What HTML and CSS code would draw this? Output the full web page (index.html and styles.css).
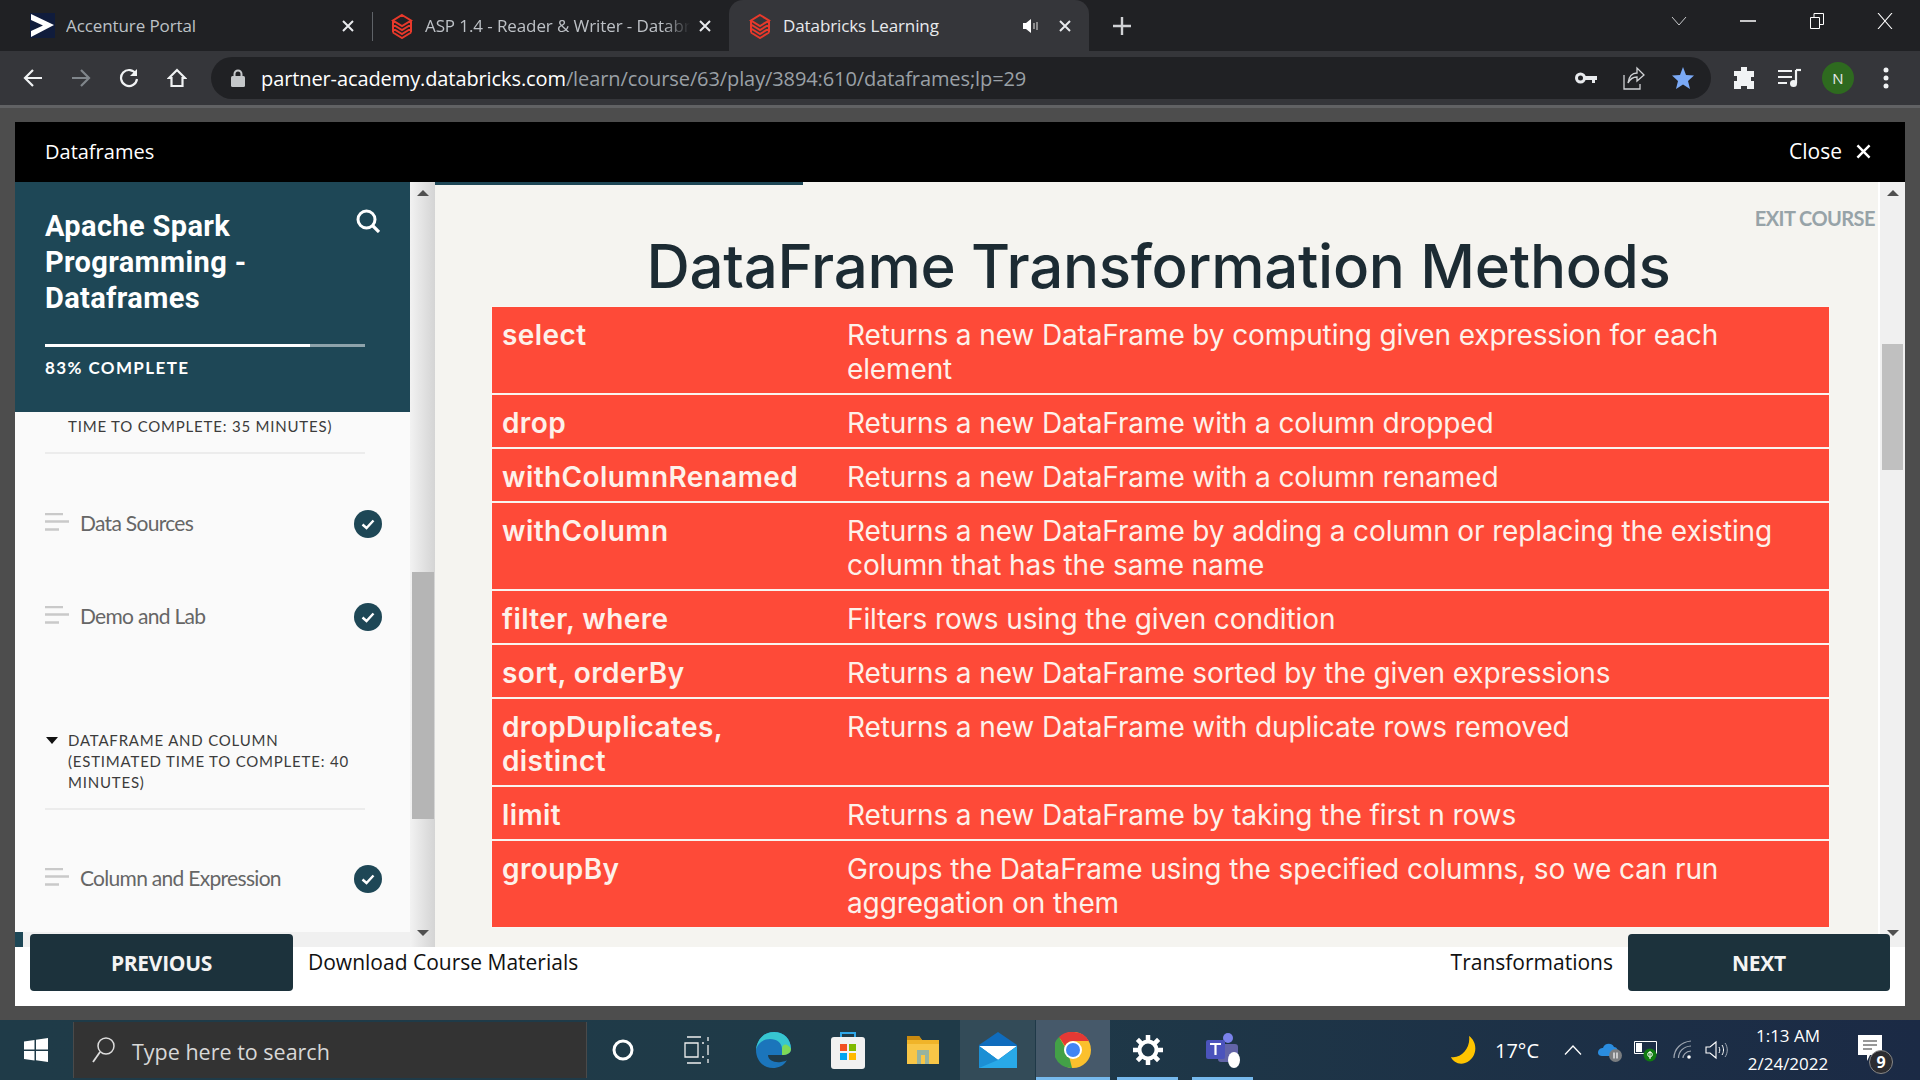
FILE: index.html
```html
<!DOCTYPE html>
<html lang="en">
<head>
    <meta charset="UTF-8">
    <title>Databricks Learning</title>
    <link rel="stylesheet" href="styles.css">
</head>
<body>
    <svg class="sprites" width="0" height="0">
        <symbol id="bricks" viewBox="0 0 24 26">
            <path d="M12 2 21 7.5 12 13 3 7.5ZM3 11.5 12 17 21 11.5M3 15.5 12 21 21 15.5M3 19.5 12 25 21 19.5M3 7.5V19.5M21 7.5V19.5" fill="none" stroke="#e8392b" stroke-width="2"/>
        </symbol>
        <symbol id="done" viewBox="0 0 28 28">
            <circle cx="14" cy="14" r="14" fill="#1e4756"/>
            <path d="M8.5 14.5 12.5 18 19.5 10.5" fill="none" stroke="#fff" stroke-width="2.4"/>
        </symbol>
        <symbol id="lines" viewBox="0 0 24 18">
            <path d="M0 1H18M0 8.500H24M0 16.500H14" stroke="#c9c9c9" stroke-width="2.600"/>
        </symbol>
        <symbol id="cross" viewBox="0 0 14 14">
            <path d="M2 2 12 12M12 2 2 12" fill="none" stroke="currentColor" stroke-width="2"/>
        </symbol>
    </svg>

    <header class="tabstrip">
        <div class="tab tab-first">
            <svg class="favicon" width="25" height="25" viewBox="0 0 25 25">
                <rect width="25" height="25" fill="#101c3c"/>
                <path d="M1 1 24 12 1 24V18L13 12.500 1 7Z" fill="#fff"/>
            </svg>
            <span class="tab-title">Accenture Portal</span>
            <svg class="tab-close" width="14" height="14"><use href="#cross"/></svg>
        </div>
        <div class="tab tab-second">
            <svg class="favicon" width="24" height="26"><use href="#bricks"/></svg>
            <span class="tab-title tab-fade">ASP 1.4 - Reader &amp; Writer - Databricks Academy</span>
            <svg class="tab-close" width="14" height="14"><use href="#cross"/></svg>
        </div>
        <div class="tab tab-active">
            <svg class="favicon" width="24" height="26"><use href="#bricks"/></svg>
            <span class="tab-title">Databricks Learning</span>
            <svg class="tab-sound" width="16" height="14" viewBox="0 0 16 14"><path d="M0 4H3L8 0V14L3 10H0Z" fill="#fff"/><path d="M11 4V10M14 3V11" stroke="#aaa" stroke-width="1.500"/></svg>
            <svg class="tab-close" width="14" height="14"><use href="#cross"/></svg>
        </div>
        <svg class="tab-new" width="18" height="18" viewBox="0 0 18 18"><path d="M9 0V18M0 9H18" stroke="#d0d2d5" stroke-width="2.400"/></svg>
        <div class="window-btns">
            <svg width="16" height="10" viewBox="0 0 16 10"><path d="M1 1 8 9 15 1" fill="none" stroke="#c8cacc"/></svg>
            <svg width="16" height="2" viewBox="0 0 16 2"><path d="M0 1H16" stroke="#fff" stroke-width="1.500"/></svg>
            <svg width="14" height="16" viewBox="0 0 14 16"><path d="M.5 4.500H9.500V15.500H.5ZM4 4.500V.5H13.500V11.500H9.500" fill="none" stroke="#fff"/></svg>
            <svg width="16" height="16" viewBox="0 0 16 16"><path d="M1 0 15 16M15 0 1 16" stroke="#fff" stroke-width="1.100"/></svg>
        </div>
    </header>

    <nav class="toolbar">
        <svg class="nav-btn" width="20" height="20" viewBox="0 0 20 20"><path d="M19 10H3M10 2 2 10 10 18" fill="none" stroke="#f1f3f4" stroke-width="2.200"/></svg>
        <svg class="nav-btn" width="20" height="20" viewBox="0 0 20 20"><path d="M1 10H17M10 2 18 10 10 18" fill="none" stroke="#80868b" stroke-width="2.200"/></svg>
        <svg class="nav-btn" width="20" height="20" viewBox="0 0 20 20"><path d="M17 6A8 8 0 1 0 18 11" fill="none" stroke="#f1f3f4" stroke-width="2.200"/><path d="M18 1V8H11Z" fill="#f1f3f4"/></svg>
        <svg class="nav-btn" width="20" height="20" viewBox="0 0 20 20"><path d="M10 2 2 10H4.500V18H15.500V10H18Z" fill="none" stroke="#f1f3f4" stroke-width="2.200"/></svg>
        <div class="omnibox">
            <svg class="lock" width="14" height="18" viewBox="0 0 14 18"><path d="M3.500 8V5A3.500 3.500 0 0 1 10.500 5V8" fill="none" stroke="#c4c7c9" stroke-width="2"/><rect y="7" width="14" height="11" rx="1.500" fill="#c4c7c9"/></svg>
            <span class="url"><b>partner-academy.databricks.com</b>/learn/course/63/play/3894:610/dataframes;lp=29</span>
            <svg class="omni-icon" width="22" height="12" viewBox="0 0 22 12"><circle cx="5.500" cy="6" r="4" fill="none" stroke="#e8eaed" stroke-width="3"/><path d="M9 4H22V8H20V11H17V8H9Z" fill="#e8eaed"/></svg>
            <svg class="omni-icon" width="22" height="24" viewBox="0 0 22 24"><path d="M1 9V23H17V18M5 17C6 10 10 7 14 7V2L21 9 14 15V11C10 11 7 13 5 17Z" fill="none" stroke="#d0d2d5" stroke-width="1.300"/></svg>
            <svg class="omni-icon" width="24" height="24" viewBox="0 0 24 24"><path d="M12 1 15 9 23 9.500 17 15 19 23 12 18.500 5 23 7 15 1 9.500 9 9Z" fill="#7baaf7"/></svg>
        </div>
        <svg class="ext-btn" width="22" height="24" viewBox="0 0 22 24"><path d="M8 1H14V5H21V11H18V15H21V23H14V20H8V23H1V15H4V10H1V5H8Z" fill="#f1f3f4"/></svg>
        <svg class="ext-btn" width="24" height="20" viewBox="0 0 24 20"><path d="M1 3H15M1 9H15M1 15H10" stroke="#f1f3f4" stroke-width="2"/><path d="M19 2V15" stroke="#f1f3f4" stroke-width="2.200"/><path d="M19 2H24" stroke="#f1f3f4" stroke-width="2.200"/><circle cx="16.500" cy="15.500" r="3.500" fill="#f1f3f4"/></svg>
        <span class="avatar">N</span>
        <svg class="ext-btn" width="6" height="22" viewBox="0 0 6 22"><circle cx="3" cy="3" r="2.500" fill="#f1f3f4"/><circle cx="3" cy="11" r="2.500" fill="#f1f3f4"/><circle cx="3" cy="19" r="2.500" fill="#f1f3f4"/></svg>
    </nav>

    <main class="stage">
        <section class="player">
            <div class="player-head">
                <span class="player-name">Dataframes</span>
                <span class="player-close">Close <svg width="17" height="17"><use href="#cross"/></svg></span>
            </div>

            <div class="player-body">
                <aside class="sidebar">
                    <div class="course-head">
                        <div class="course-top">
                            <h2>Apache Spark Programming - Dataframes</h2>
                            <svg width="24" height="24" viewBox="0 0 24 24"><circle cx="10.500" cy="10.500" r="8.500" fill="none" stroke="#fff" stroke-width="3"/><path d="M16.500 16.500 23 23" stroke="#fff" stroke-width="3.200"/></svg>
                        </div>
                        <div class="progress"><div class="progress-fill"></div></div>
                        <div class="progress-label">83% COMPLETE</div>
                    </div>
                    <div class="lessons">
                        <div class="section-label section-cut">TIME TO COMPLETE: 35 MINUTES)</div>
                        <div class="lesson lesson-first">
                            <svg width="24" height="18"><use href="#lines"/></svg>
                            <span>Data Sources</span>
                            <svg class="lesson-done" width="28" height="28"><use href="#done"/></svg>
                        </div>
                        <div class="lesson lesson-second">
                            <svg width="24" height="18"><use href="#lines"/></svg>
                            <span>Demo and Lab</span>
                            <svg class="lesson-done" width="28" height="28"><use href="#done"/></svg>
                        </div>
                        <div class="section-label section-open">DATAFRAME AND COLUMN (ESTIMATED TIME TO COMPLETE: 40 MINUTES)</div>
                        <div class="lesson lesson-third">
                            <svg width="24" height="18"><use href="#lines"/></svg>
                            <span>Column and Expression</span>
                            <svg class="lesson-done" width="28" height="28"><use href="#done"/></svg>
                        </div>
                    </div>
                    <div class="sidebar-foot"></div>
                </aside>

                <div class="scrollbar scrollbar-side">
                    <i class="arrow-up"></i>
                    <div class="thumb thumb-side"></div>
                    <i class="arrow-down"></i>
                </div>

                <div class="slide">
                    <div class="slide-progress"></div>
                    <div class="exit-course">EXIT COURSE</div>
                    <h1>DataFrame Transformation Methods</h1>
                    <table class="methods">
                        <tr><th>select</th><td>Returns a new DataFrame by computing given expression for each element</td></tr>
                        <tr><th>drop</th><td>Returns a new DataFrame with a column dropped</td></tr>
                        <tr><th>withColumnRenamed</th><td>Returns a new DataFrame with a column renamed</td></tr>
                        <tr><th>withColumn</th><td>Returns a new DataFrame by adding a column or replacing the existing column that has the same name</td></tr>
                        <tr><th>filter, where</th><td>Filters rows using the given condition</td></tr>
                        <tr><th>sort, orderBy</th><td>Returns a new DataFrame sorted by the given expressions</td></tr>
                        <tr><th>dropDuplicates, distinct</th><td>Returns a new DataFrame with duplicate rows removed</td></tr>
                        <tr><th>limit</th><td>Returns a new DataFrame by taking the first n rows</td></tr>
                        <tr><th>groupBy</th><td>Groups the DataFrame using the specified columns, so we can run aggregation on them</td></tr>
                    </table>
                </div>

                <div class="scrollbar scrollbar-main">
                    <i class="arrow-up"></i>
                    <div class="thumb thumb-main"></div>
                    <i class="arrow-down"></i>
                </div>
            </div>

            <div class="player-foot">
                <button class="foot-btn">PREVIOUS</button>
                <span class="foot-link">Download Course Materials</span>
                <span class="foot-next">Transformations</span>
                <button class="foot-btn foot-btn-next">NEXT</button>
            </div>
        </section>
    </main>

    <footer class="taskbar">
        <div class="start">
            <svg width="24" height="24" viewBox="0 0 24 24"><path d="M0 3.500 10.500 2V11.500H0ZM12 1.800 24 0V11.500H12ZM0 13H10.500V22.500L0 21ZM12 13H24V24L12 22.300Z" fill="#fff"/></svg>
        </div>
        <div class="search">
            <svg width="26" height="28" viewBox="0 0 26 28"><circle cx="15" cy="10" r="8" fill="none" stroke="#ddd" stroke-width="1.500"/><path d="M9 16 2 26" stroke="#ddd" stroke-width="1.800"/></svg>
            <span>Type here to search</span>
        </div>
        <div class="task-slot slot-cortana"><svg width="24" height="24" viewBox="0 0 24 24"><circle cx="12" cy="12" r="9" fill="none" stroke="#fff" stroke-width="3"/></svg></div>
        <div class="task-slot slot-view"><svg width="26" height="28" viewBox="0 0 26 28"><path d="M3 1H17M3 27H17M1 7H14V21H1ZM18 7H20M18 21H20M24 1V5M24 9V19M24 23V27" fill="none" stroke="#eee" stroke-width="1.300"/></svg></div>
        <div class="task-slot">
            <svg width="38" height="38" viewBox="0 0 38 38"><path d="M2 19C3 8 10 1 20 1 30 1 37 8 37 18 37 22 33 24 28 24H14C14 29 20 32 27 31 30 30.500 32 30 33 29 30 35 24 37 19 37 9 37 2 29 2 19Z" fill="#1b75bb"/><path d="M2 19C4 11 10 8 16 8 23 8 28 12 28 18H37C37 8 30 1 20 1 10 1 3 8 2 19Z" fill="#37c6d0"/><path d="M28 18C28 12 34 12 37 18 37 22 33 24 28 24Z" fill="#7dd957"/></svg>
        </div>
        <div class="task-slot">
            <svg width="34" height="38" viewBox="0 0 34 38"><path d="M10 8V2H24V8" fill="none" stroke="#30a7e8" stroke-width="2"/><rect y="6" width="34" height="32" rx="3" fill="#f1f1f1"/><rect x="9" y="13" width="7" height="7" fill="#f25022"/><rect x="18" y="13" width="7" height="7" fill="#7fba00"/><rect x="9" y="22" width="7" height="7" fill="#00a4ef"/><rect x="18" y="22" width="7" height="7" fill="#ffb900"/></svg>
        </div>
        <div class="task-slot">
            <svg width="32" height="32" viewBox="0 0 32 32"><path d="M0 2H12L15 6H32V30H0Z" fill="#f0b429"/><path d="M0 2H12L15 6H0Z" fill="#c98a10"/><path d="M10 16H22V30H18V21H14V30H10Z" fill="#2f8fd8"/><path d="M0 10H32V30H0Z" fill="#ffd766" opacity=".5"/></svg>
        </div>
        <div class="task-slot slot-lit">
            <svg width="38" height="36" viewBox="0 0 38 36"><path d="M0 13 19 0 38 13V36H0Z" fill="#0f6cbd"/><path d="M0 14H38L19 28Z" fill="#fff"/><path d="M0 14V36H38V14L19 28Z" fill="#29a9e8"/><path d="M0 14 19 28 0 36Z" fill="#1c8fd4"/></svg>
        </div>
        <div class="task-slot slot-lit slot-chrome slot-open">
            <svg width="36" height="36" viewBox="0 0 36 36"><circle cx="18" cy="18" r="18" fill="#fbc02d"/><path d="M18 0A18 18 0 0 1 34 9H18A9 9 0 0 0 10 14L4 5A18 18 0 0 1 18 0Z" fill="#e53935"/><path d="M4 5 13 20 17 36A18 18 0 0 1 4 5Z" fill="#43a047"/><circle cx="18" cy="18" r="9" fill="#fff"/><circle cx="18" cy="18" r="7" fill="#4285f4"/></svg>
        </div>
        <div class="task-slot slot-open">
            <svg width="30" height="30" viewBox="0 0 30 30"><circle cx="15" cy="15" r="8.500" fill="none" stroke="#fff" stroke-width="4"/><path d="M15 0V6M15 24V30M0 15H6M24 15H30M4.400 4.400 8.600 8.600M21.400 21.400 25.600 25.600M25.600 4.400 21.400 8.600M8.600 21.400 4.400 25.600" stroke="#fff" stroke-width="4.500"/></svg>
        </div>
        <div class="task-slot slot-open">
            <svg width="36" height="36" viewBox="0 0 36 36"><circle cx="23" cy="6" r="5" fill="#7b83eb"/><rect x="13" y="12" width="20" height="18" rx="3" fill="#6264a7"/><rect x="1" y="8" width="19" height="19" rx="2" fill="#4b53bc"/><path d="M5 12H16M10.500 12V23" stroke="#fff" stroke-width="2.200"/><ellipse cx="29" cy="28" rx="6" ry="8" fill="#fff"/></svg>
        </div>

        <div class="tray">
            <div class="tray-slot tray-moon"><svg width="26" height="28" viewBox="0 0 26 28"><path d="M18 0C27 6 27 22 14 27 8 29 2 26 0 21 10 23 20 12 18 0Z" fill="#ffc400"/></svg></div>
            <div class="tray-temp">17°C</div>
            <div class="tray-slot tray-chev"><svg width="18" height="10" viewBox="0 0 18 10"><path d="M1 9.500 9 1 17 9.500" fill="none" stroke="#fff" stroke-width="1.300"/></svg></div>
            <div class="tray-slot tray-cloud"><svg width="24" height="24" viewBox="0 0 24 24"><path d="M0 15C0 11 3 10 5 10 6 5 14 4 16 9 19 9 20 12 20 15 20 17 18 18 16 18H4C2 18 0 17 0 15Z" fill="#2a8de0"/><circle cx="17.500" cy="17.500" r="6.500" fill="#7a7d80"/><path d="M16 14.500V20.500M19 14.500V20.500" stroke="#fff" stroke-width="1.200"/></svg></div>
            <div class="tray-slot tray-batt"><svg width="24" height="24" viewBox="0 0 24 24"><path d="M.5 3.500H22.500V15.500H.5Z" fill="none" stroke="#fff"/><rect x="2" y="5" width="6" height="9" fill="#fff"/><circle cx="16" cy="17" r="6.500" fill="#107c10"/><path d="M16 13V21M14 15C13 18 15 19 16 19 17 19 19 18 18 15 17 14 15 14 14 15Z" fill="none" stroke="#fff"/></svg></div>
            <div class="tray-slot tray-wifi"><svg width="20" height="20" viewBox="0 0 20 20"><path d="M1 18C1 9 8 2 18 1M5.500 18C5.500 12 10 6.500 18 6M10 18C10 15 12.500 11.500 18 11" fill="none" stroke="#9fa7b2" stroke-width="1.200"/><circle cx="16" cy="17" r="1.800" fill="#fff"/></svg></div>
            <div class="tray-slot tray-vol"><svg width="24" height="20" viewBox="0 0 24 20"><path d="M1 7H5L11 2V18L5 13H1Z" fill="none" stroke="#fff" stroke-width="1.100"/><path d="M14 7C15 9 15 11 14 13M17 5C19 8 19 12 17 15" fill="none" stroke="#fff"/><path d="M20 3C23 7 23 13 20 17" fill="none" stroke="#9fa7b2"/></svg></div>
            <div class="clock">
                <span>1:13 AM</span>
                <span>2/24/2022</span>
            </div>
            <div class="notif">
                <svg width="24" height="28" viewBox="0 0 24 28"><path d="M0 0H24V20H12L9 26V20H0Z" fill="#fff"/><path d="M5 6H19M5 10H19M5 14H14" stroke="#333" stroke-width="1.200"/></svg>
                <span class="notif-count">9</span>
            </div>
        </div>
    </footer>
</body>
</html>
```
FILE: styles.css
```css
/* Page */
* {
    box-sizing: border-box;
}

body {
    margin: 0;
    width: 1920px;
    height: 1080px;
    overflow: hidden;
    display: flex;
    flex-direction: column;
    background-color: #4d4d4d;
    font-family: "Open Sans", sans-serif;
}

.sprites {
    position: absolute;
}

/* Tabs */
.tabstrip {
    height: 51px;
    flex-shrink: 0;
    display: flex;
    align-items: stretch;
    background-color: #202124;
    color: #bdc1c6;
    font-size: 17px;
    letter-spacing: -0.1px;
}

.tab {
    width: 357px;
    display: flex;
    align-items: center;
    position: relative;
}

.tab-first {
    margin-left: 15px;
    padding-left: 15px;
}

.tab-second {
    padding-left: 18px;
}

.tab-second::before {
    content: "";
    position: absolute;
    left: 0;
    top: 12px;
    height: 29px;
    border-left: 1px solid #5f6368;
}

.tab-active {
    width: 360px;
    padding-left: 19px;
    background-color: #35363a;
    border-radius: 14px 14px 0 0;
    color: #e8eaed;
}

.favicon {
    flex-shrink: 0;
    margin-right: 11px;
}

.tab-title {
    flex: 1;
    white-space: nowrap;
    overflow: hidden;
}

.tab-fade {
    -webkit-mask-image: linear-gradient(to right, #000 90%, transparent);
    mask-image: linear-gradient(to right, #000 90%, transparent);
}

.tab-close {
    margin: 0 17px 0 8px;
    flex-shrink: 0;
    color: #e8eaed;
}

.tab-sound {
    margin-right: 11px;
}

.tab-new {
    align-self: center;
    margin-left: 24px;
}

.window-btns {
    margin-left: auto;
    display: flex;
    align-items: center;
    height: 42px;
    width: 249px;
    padding: 0 27px 0 0;
    justify-content: space-between;
}

/* Address bar */
.toolbar {
    height: 54px;
    flex-shrink: 0;
    display: flex;
    align-items: center;
    padding-bottom: 0;
    background-color: #35363a;
    border-bottom: 0;
    box-shadow: 0 3px 0 #616264;
    position: relative;
    z-index: 1;
}

.nav-btn {
    margin-left: 23px;
    margin-right: 5px;
}

.omnibox {
    width: 1500px;
    height: 42px;
    margin-left: 19px;
    padding: 0 16px 0 20px;
    display: flex;
    align-items: center;
    border-radius: 21px;
    background-color: #202124;
}

.lock {
    margin-right: 16px;
}

.url {
    flex: 1;
    font-size: 20px;
    letter-spacing: -0.1px;
    color: #9aa0a6;
    white-space: nowrap;
}

.url b {
    font-weight: 400;
    color: #fff;
}

.omni-icon {
    margin-left: 26px;
}

.ext-btn {
    margin-left: 22px;
}

.avatar {
    width: 32px;
    height: 32px;
    margin-left: 21px;
    border-radius: 50%;
    display: flex;
    align-items: center;
    justify-content: center;
    background-color: #2e6a1f;
    color: #e8eaed;
    font-size: 15px;
}

.avatar + .ext-btn {
    margin-left: 29px;
}

/* Player */
.stage {
    flex: 1;
    padding: 17px 15px 14px;
    min-height: 0;
}

.player {
    height: 884px;
    display: flex;
    flex-direction: column;
    background-color: #fff;
}

.player-head {
    height: 60px;
    flex-shrink: 0;
    display: flex;
    align-items: center;
    justify-content: space-between;
    padding: 0 33px 2px 30px;
    background-color: #000;
    color: #fff;
    font-size: 20px;
}

.player-close {
    display: flex;
    align-items: center;
    gap: 13px;
    font-size: 21px;
}

.player-body {
    flex: 1;
    display: flex;
    min-height: 0;
}

/* Sidebar */
.sidebar {
    width: 395px;
    display: flex;
    flex-direction: column;
    background-color: #fafafa;
}

.course-head {
    height: 230px;
    flex-shrink: 0;
    padding: 26px 30px 0;
    background-color: #1e4756;
    color: #fff;
}

.course-top {
    display: flex;
    justify-content: space-between;
    align-items: flex-start;
    height: 136px;
}

.course-top h2 {
    margin: 0;
    width: 270px;
    font-family: Roboto, sans-serif;
    font-size: 29px;
    line-height: 36px;
    font-weight: 700;
    letter-spacing: 0.35px;
}

.course-top svg {
    margin: 1px 0 0 0;
}

.progress {
    height: 3px;
    width: 320px;
    background-color: #8ea3ab;
}

.progress-fill {
    width: 265px;
    height: 100%;
    background-color: #fff;
}

.progress-label {
    margin-top: 10px;
    font-family: Lato, sans-serif;
    font-size: 17px;
    font-weight: 700;
    letter-spacing: 1.4px;
}

.lessons {
    flex: 1;
    min-height: 0;
    overflow: hidden;
    padding: 4px 28px 0 30px;
}

.section-label {
    width: 320px;
    padding: 0 0 15px 23px;
    border-bottom: 2px solid #ececec;
    font-family: Lato, sans-serif;
    font-size: 15px;
    line-height: 21px;
    letter-spacing: 0.8px;
    color: #3c3c3c;
}

.section-open {
    position: relative;
    margin-top: 95px;
    padding-right: 15px;
}

.section-open::before {
    content: "";
    position: absolute;
    left: 1px;
    top: 7px;
    border-style: solid;
    border-width: 7px 6px 0;
    border-color: #111 transparent transparent;
}

.lesson {
    height: 40px;
    display: flex;
    align-items: center;
    font-family: Lato, sans-serif;
    font-size: 21px;
    letter-spacing: -0.7px;
    color: #666;
}

.lesson > svg:first-child {
    margin-right: 11px;
    margin-top: -1px;
}

.lesson-first {
    margin-top: 48px;
}

.lesson-second {
    margin-top: 53px;
}

.lesson-third {
    margin-top: 47px;
}

.lesson-done {
    margin-left: auto;
    margin-top: 4px;
}

.sidebar-foot {
    height: 15px;
    flex-shrink: 0;
    background: linear-gradient(to right, #1e4756 8px, #f0f0f0 8px);
}

/* Scrollbars */
.scrollbar {
    width: 25px;
    flex-shrink: 0;
    position: relative;
    background-color: #f0f0f0;
}

.scrollbar-side {
    background: linear-gradient(to right, #f2f2f2, #d4d4d4);
}

.thumb {
    position: absolute;
    background-color: #c0c0c0;
}

.thumb-side {
    left: 2px;
    right: 1px;
    top: 390px;
    height: 247px;
    background-color: #b5b5b5;
}

.thumb-main {
    left: 2px;
    right: 2px;
    top: 162px;
    height: 126px;
}

.arrow-up,
.arrow-down {
    position: absolute;
    left: 7px;
    border-style: solid;
    border-color: transparent;
}

.arrow-up {
    top: 8px;
    border-width: 0 6px 6px;
    border-bottom-color: #505050;
}

.arrow-down {
    bottom: 11px;
    border-width: 6px 6px 0;
    border-top-color: #505050;
}

/* Slide */
.slide {
    flex: 1;
    min-width: 0;
    position: relative;
    padding: 0 49px 0 57px;
    background-color: #f5f4f0;
    text-align: center;
    border-right: 2px solid #fff;
}

.slide-progress {
    width: 368px;
    height: 3px;
    margin-left: -57px;
    background-color: #1e4756;
}

.exit-course {
    position: absolute;
    right: 3px;
    top: 24px;
    font-family: Lato, sans-serif;
    font-size: 20px;
    font-weight: 700;
    color: #97a3a8;
    letter-spacing: -0.55px;
}

.slide h1 {
    margin: 0;
    height: 122px;
    padding-top: 47px;
    padding-right: 4px;
    font-family: Inter, sans-serif;
    font-size: 60px;
    line-height: 68px;
    font-weight: 500;
    letter-spacing: -0.3px;
    color: #1c2b33;
}

.methods {
    width: 100%;
    border-collapse: collapse;
    table-layout: fixed;
    box-shadow: 0 0 0 1px #faf6f2;
    color: #fdf1ea;
    font-family: Inter, sans-serif;
    font-size: 28px;
    line-height: 34px;
    text-align: left;
}

.methods tr {
    border-bottom: 2px solid #f9f4ef;
}

.methods tr:last-child {
    border-bottom: 0;
}

.methods th,
.methods td {
    padding: 11px 10px 7px;
    vertical-align: top;
    background-color: #fe4a38;
}

.methods th {
    width: 345px;
    padding-right: 30px;
    font-weight: 600;
    letter-spacing: 0.4px;
}

.methods td {
    padding-right: 40px;
    font-weight: 400;
    letter-spacing: -0.12px;
}

/* Bottom buttons */
.player-foot {
    height: 59px;
    flex-shrink: 0;
    position: relative;
    z-index: 1;
    display: flex;
    align-items: flex-start;
    padding: 0 15px;
    font-size: 21px;
    color: #111;
}

.foot-btn {
    width: 263px;
    height: 57px;
    margin-top: -13px;
    border: 0;
    border-radius: 4px;
    background-color: #1c323c;
    color: #f4f4f4;
    font-family: "Open Sans", sans-serif;
    font-size: 21px;
    font-weight: 700;
    letter-spacing: -0.3px;
}

.foot-link {
    margin-left: 15px;
    margin-top: 1px;
}

.foot-next {
    margin-left: auto;
    margin-top: 1px;
}

.foot-btn-next {
    margin-left: 15px;
    width: 262px;
}

/* Taskbar */
.taskbar {
    height: 60px;
    flex-shrink: 0;
    display: flex;
    background: linear-gradient(to right, #1f3b48, #1f3a48 50%, #1b2a45);
}

.start {
    width: 73px;
    display: flex;
    align-items: center;
    justify-content: center;
    padding-right: 2px;
}

.search {
    width: 514px;
    margin: 2px 0;
    padding: 0 0 0 17px;
    display: flex;
    align-items: center;
    gap: 15px;
    background-color: #333;
    border: 1px solid #4a4a4a;
    border-width: 0 1px;
    color: #d8d8d8;
    font-size: 21.500px;
}

.search span {
    padding-top: 2px;
}

.task-slot {
    width: 75px;
    display: flex;
    align-items: center;
    justify-content: center;
    position: relative;
}

.slot-cortana {
    width: 71px;
}

.slot-view {
    width: 77px;
}

.slot-lit {
    background-color: #334b58;
}

.slot-chrome {
    background-color: #46596a;
    margin-left: 1px;
    width: 74px;
}

.slot-open::after {
    content: "";
    position: absolute;
    left: 7px;
    right: 7px;
    bottom: 0;
    height: 3px;
    background-color: #76b9ed;
}

.slot-chrome::after {
    left: 0;
    right: 0;
}

.tray {
    margin-left: auto;
    display: flex;
    align-items: center;
    color: #fff;
}

.tray-slot {
    display: flex;
    justify-content: center;
}

.tray-moon {
    width: 47px;
}

.tray-temp {
    width: 66px;
    padding-left: 8px;
    font-size: 20px;
}

.tray-chev {
    width: 40px;
}

.tray-cloud {
    width: 34px;
}

.tray-batt {
    width: 38px;
}

.tray-wifi {
    width: 36px;
}

.tray-vol {
    width: 32px;
}

.clock {
    width: 110px;
    display: flex;
    flex-direction: column;
    align-items: center;
    gap: 6px;
    font-size: 17px;
    line-height: 22px;
}

.notif {
    width: 60px;
    height: 60px;
    position: relative;
    display: flex;
    align-items: center;
    justify-content: center;
    padding: 0 6px 2px 0;
    margin-right: 17px;
}

.notif-count {
    position: absolute;
    right: 10px;
    bottom: 6px;
    width: 24px;
    height: 24px;
    border-radius: 50%;
    border: 1px solid #888;
    background-color: #2c2c30;
    font-size: 16px;
    font-weight: 700;
    line-height: 22px;
    text-align: center;
}
```
